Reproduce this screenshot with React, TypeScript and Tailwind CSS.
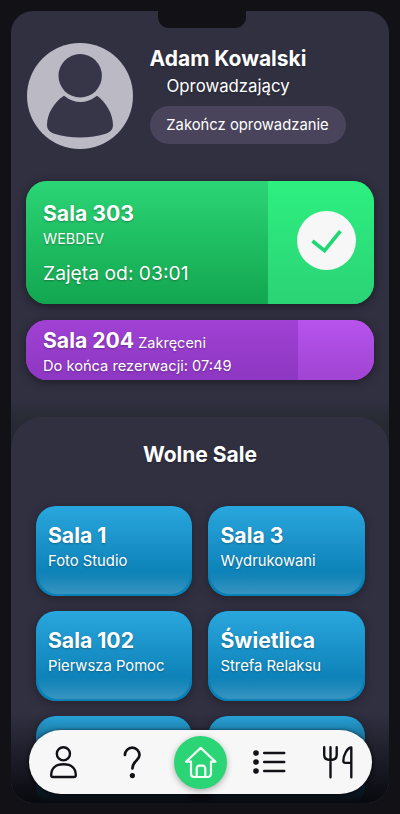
import React from "react";

const rooms = [
  { name: "Sala 1", use: "Foto Studio" },
  { name: "Sala 3", use: "Wydrukowani" },
  { name: "Sala 102", use: "Pierwsza Pomoc" },
  { name: "Świetlica", use: "Strefa Relaksu" },
];

const tileClass =
  "relative h-[90px] overflow-hidden rounded-[20px] bg-[#0782b8] shadow-[0_2px_8px_rgba(35,25,30,0.65)]";

function TileFace() {
  return (
    <>
      <div className="absolute inset-0 rounded-[20px] bg-linear-to-b from-[#29a7de] via-[#087fb5] via-80% to-[#0782b8]" />
      <div className="absolute inset-x-[2px] top-0 bottom-[2px] rounded-[20px] bg-linear-to-b from-transparent from-74% to-[#3994c0]" />
    </>
  );
}

function RoomTile({ name, use }: { name: string; use: string }) {
  return (
    <div className={tileClass}>
      <TileFace />
      <div className="relative px-[12.5px] pt-[15px]">
        <h3 className="text-[21.2px] leading-[28px] font-bold">{name}</h3>
        <p className="mt-[1px] text-[14.8px] leading-[22px]">{use}</p>
      </div>
    </div>
  );
}

function Avatar() {
  return (
    <svg className="h-[106px] w-[106px] shrink-0" viewBox="0 0 106 106">
      <circle cx="53" cy="53" r="53" fill="#bbb9c3" />
      <circle cx="53.2" cy="32.8" r="21.7" fill="#373548" />
      <path d="M37 52.7Q53.5 65.5 70 52.7C79 59 86 71 86 82Q86 88 79.5 90.5Q67 94.5 53 94.5Q39 94.5 26.5 90.5Q20 88 20 82C20 71 27 59 37 52.7Z" fill="#373548" />
    </svg>
  );
}

function BottomNav() {
  return (
    <nav className="absolute top-[719px] left-[18px] h-[64px] w-[343px] rounded-full bg-[#f7f7f7] shadow-[0_1px_4px_#050608]">
      <div className="absolute top-[6px] left-[145px] h-[53px] w-[53px] rounded-full bg-[#2bd475] shadow-[0_2px_6px_rgba(0,0,0,0.3)]" />
      <svg className="absolute inset-0 h-full w-full" viewBox="0 0 343 64" fill="none" stroke="#111217" strokeWidth="2.4" strokeLinecap="round" strokeLinejoin="round">
        <circle cx="34.4" cy="23.8" r="6.6" />
        <path d="M22.2 45.2C22.2 38.5 26.6 34.3 34.5 34.3C42.4 34.3 46.8 38.5 46.8 45.2Q46.8 47 44.8 47H24.2Q22.2 47 22.2 45.2Z" />
        <path d="M95.9 25A7.3 7.3 0 0 1 110.5 25C110.5 31 103.4 30.7 103.4 38.4" strokeWidth="2.7" />
        <circle cx="103.4" cy="45.6" r="2.6" fill="#111217" stroke="none" />
        <g stroke="#f5fff8" strokeWidth="2.2">
          <path d="M162 31.7H157L171.7 17.9L186.5 31.7H182V43Q182 47 178.5 47H165Q162 47 162 43.5V31.7" />
          <path d="M167.7 47V39Q167.7 35.6 170.4 35.6H173.5Q176.3 35.6 176.3 39V47" />
        </g>
        <g fill="#111217" stroke="none">
          <circle cx="227" cy="23" r="2.8" />
          <circle cx="227" cy="32" r="2.8" />
          <circle cx="227" cy="41" r="2.8" />
        </g>
        <path d="M235.2 23H255.2M235.2 32H255.2M235.2 41H255.2" strokeWidth="2.5" />
        <path d="M295.2 17.3V25Q295.2 30 301.5 30Q307.7 30 307.7 25V17.3M301.5 17.3V47.3" strokeWidth="2.4" />
        <path d="M322.3 47.3V17.5C318.5 17.5 314.3 25 314.3 31Q314.3 32.9 316.2 32.9H322.3" strokeWidth="2.4" />
      </svg>
    </nav>
  );
}

export default function App() {
  return (
    <div className="h-[814px] w-full overflow-hidden bg-[#111116] pt-[11px] text-white [font-family:Inter,sans-serif]">
      <main className="relative mx-auto h-[792px] w-[378px] overflow-hidden rounded-[22px] bg-[#303041] text-shadow-[0_1px_2px_rgba(0,0,0,0.3)]">
        <div className="absolute top-0 left-[147px] h-[17px] w-[88px] rounded-b-[11px] bg-[#111116]" />

        <header className="flex h-[170px] gap-[17px] pt-[32px] pl-[15.5px]">
          <Avatar />
          <div className="pt-[2px]">
            <h1 className="text-[21px] leading-[28px] font-bold whitespace-nowrap">Adam Kowalski</h1>
            <p className="pl-[17px] text-[16.8px] leading-[26px]">Oprowadzający</p>
            <button className="mt-[7px] h-[38px] w-[196px] rounded-full bg-[#49445b] pt-px text-[14.8px] whitespace-nowrap">Zakończ oprowadzanie</button>
          </div>
        </header>

        <section className="mx-[15px] flex h-[123px] overflow-hidden rounded-[21px] bg-[#12a650] shadow-[0_2px_8px_rgba(20,15,22,0.65)]">
          <div className="w-[242px] bg-linear-to-b from-[#2bd575] to-[#12a650] pt-[18px] pl-[17px]">
            <h2 className="text-[21.2px] leading-[29px] font-bold">Sala 303</h2>
            <p className="text-[14.4px] leading-[22px]">WEBDEV</p>
            <p className="mt-[8px] text-[19.3px] leading-[30px]">Zajęta od: 03:01</p>
          </div>
          <div className="flex-1 bg-linear-to-b from-[#2df080] to-[#2bd375] pt-[30px] pl-[29px]">
            <div className="h-[59px] w-[59px] rounded-full bg-[#f7f7f7]">
              <svg viewBox="0 0 59 59" className="h-full w-full" fill="none" stroke="#20d873" strokeWidth="3.7">
                <path d="M15.5 30L27.5 39.7L43.3 20.2" />
              </svg>
            </div>
          </div>
        </section>

        <section className="mx-[15px] mt-[16px] flex h-[60px] overflow-hidden rounded-[21px] bg-[#8d37c2] shadow-[0_2px_8px_rgba(20,20,22,0.65)]">
          <div className="w-[272px] bg-linear-to-b from-[#a041d4] to-[#8d37c2] pt-[6px] pl-[17px]">
            <div className="flex h-[28px] items-baseline gap-[4px]">
              <h2 className="text-[21.2px] leading-[28px] font-bold">Sala 204</h2>
              <p className="text-[14.5px]">Zakręceni</p>
            </div>
            <p className="text-[14.65px] leading-[24px] whitespace-nowrap">Do końca rezerwacji: 07:49</p>
          </div>
          <div className="flex-1 bg-linear-to-b from-[#b653ec] to-[#a044d3]" />
        </section>

        <div className="mt-[20px] h-[17px] bg-linear-to-b from-[#303041] to-[#292b35]" />
        <div className="bg-linear-to-b from-[#292b35] to-[#24262f] to-[30px]">
          <section className="h-[400px] rounded-t-[31px] bg-[#303041] px-[24.5px] pt-[23px]">
            <h2 className="text-center text-[21px] leading-[29px] font-bold">Wolne Sale</h2>
            <div className="mt-[37px] grid grid-cols-[156.5px_156.5px] gap-x-[16px] gap-y-[15px]">
              {rooms.map((room) => (
                <RoomTile key={room.name} {...room} />
              ))}
              <div className={tileClass}><TileFace /></div>
              <div className={tileClass}><TileFace /></div>
            </div>
          </section>
        </div>

        <div className="absolute inset-x-0 bottom-0 h-[90px] bg-linear-to-b from-transparent to-[#08090e]" />
        <BottomNav />
      </main>
    </div>
  );
}
